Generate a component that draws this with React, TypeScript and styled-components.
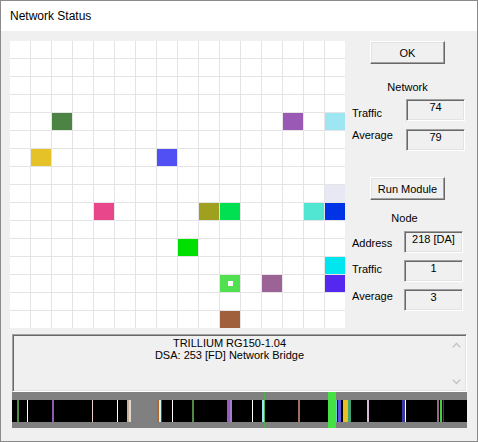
import React from 'react';
import styled, { createGlobalStyle } from 'styled-components';

const UI_FONT = `'Liberation Sans', Arial, sans-serif`;

type Mark = { row: number; col: number; color: string; dot?: boolean };

const NODES: Mark[] = [
  { row: 4, col: 2, color: '#4b8443' },
  { row: 4, col: 13, color: '#9b59b6' },
  { row: 4, col: 15, color: '#9ee6f2' },
  { row: 6, col: 1, color: '#e6c229' },
  { row: 6, col: 7, color: '#5050f5' },
  { row: 8, col: 15, color: '#e8e8f5' },
  { row: 9, col: 4, color: '#e8478c' },
  { row: 9, col: 9, color: '#a0a020' },
  { row: 9, col: 10, color: '#00e050' },
  { row: 9, col: 14, color: '#50e6d2' },
  { row: 9, col: 15, color: '#0033e6' },
  { row: 11, col: 8, color: '#00e000' },
  { row: 12, col: 15, color: '#00e6f0' },
  { row: 13, col: 10, color: '#50e050', dot: true },
  { row: 13, col: 12, color: '#9c6496' },
  { row: 13, col: 15, color: '#5528f0' },
  { row: 15, col: 10, color: '#a0603c' },
];

// activity strip: x in strip coords, width, colour, full = crosses the grey border
const TICKS: { x: number; w: number; c: string; full?: boolean }[] = [
  { x: 5, w: 2, c: '#4e8a42' },
  { x: 15, w: 1, c: '#ffffff' },
  { x: 40, w: 2, c: '#9058b0' },
  { x: 80, w: 1, c: '#f0d0d0' },
  { x: 105, w: 1, c: '#ffffff' },
  { x: 115, w: 2, c: '#c8b090' },
  { x: 117, w: 2, c: '#d8d8d8' },
  { x: 145, w: 2, c: '#b06a30' },
  { x: 147, w: 2, c: '#c8f4f4' },
  { x: 149, w: 1, c: '#3040d0' },
  { x: 160, w: 1, c: '#ffffff' },
  { x: 180, w: 2, c: '#4e8a42' },
  { x: 215, w: 3, c: '#9a5ab8' },
  { x: 218, w: 2, c: '#a080d0' },
  { x: 240, w: 1, c: '#ffffff' },
  { x: 250, w: 2, c: '#a0e4f0' },
  { x: 252, w: 1, c: '#50b050', full: true },
  { x: 286, w: 2, c: '#a07060' },
  { x: 316, w: 8, c: '#44e044', full: true },
  { x: 324, w: 1, c: '#60d8c8' },
  { x: 326, w: 3, c: '#6050e0' },
  { x: 331, w: 5, c: '#e8c020' },
  { x: 336, w: 3, c: '#40a070' },
  { x: 355, w: 2, c: '#d8b8d8' },
  { x: 390, w: 3, c: '#3838a8' },
  { x: 393, w: 1, c: '#ffffff' },
  { x: 425, w: 2, c: '#9c6488' },
  { x: 428, w: 2, c: '#40d040' },
  { x: 431, w: 1, c: '#2828f0' },
];

const GlobalStyle = createGlobalStyle`
  html, body {
    margin: 0;
    padding: 0;
    background: #f0f0f0;
  }
  * {
    box-sizing: border-box;
  }
`;

export default function App() {
  const cells = [];
  for (let row = 0; row < 16; row++) {
    for (let col = 0; col < 16; col++) {
      const mark = NODES.find((n) => n.row === row && n.col === col);
      cells.push(
        <Node key={`${row}-${col}`} $color={mark ? mark.color : '#ffffff'}>
          {mark && mark.dot && <Dot />}
        </Node>
      );
    }
  }

  return (
    <Window>
      <GlobalStyle />
      <TitleBar>Network Status</TitleBar>
      <Client>
        <TopRow>
          <NodeGrid>{cells}</NodeGrid>
          <Panel>
            <PushButton>OK</PushButton>
            <Heading $indent={25} $gap={17}>Network</Heading>
            <FieldRow $gap={5}>
              <FieldLabel $width={54} $drop={8}>Traffic</FieldLabel>
              <ValueBox>74</ValueBox>
            </FieldRow>
            <FieldRow $gap={8}>
              <FieldLabel $width={54} $drop={0}>Average</FieldLabel>
              <ValueBox>79</ValueBox>
            </FieldRow>
            <PushButton $gap={26}>Run Module</PushButton>
            <Heading $indent={22} $gap={12}>Node</Heading>
            <FieldRow $gap={6}>
              <FieldLabel $width={52} $drop={6}>Address</FieldLabel>
              <ValueBox>218 [DA]</ValueBox>
            </FieldRow>
            <FieldRow $gap={7}>
              <FieldLabel $width={52} $drop={3}>Traffic</FieldLabel>
              <ValueBox>1</ValueBox>
            </FieldRow>
            <FieldRow $gap={7}>
              <FieldLabel $width={52} $drop={1}>Average</FieldLabel>
              <ValueBox>3</ValueBox>
            </FieldRow>
          </Panel>
        </TopRow>

        <InfoBox>
          <InfoText>
            <div>TRILLIUM RG150-1.04</div>
            <div>DSA: 253 [FD] Network Bridge</div>
          </InfoText>
          <ScrollBar>
            <ScrollArrow>
              <svg width="9" height="6" viewBox="0 0 9 6">
                <path d="M0.8 5.2 L4.5 1.5 L8.2 5.2" fill="none" stroke="#c2c2c2" strokeWidth="1.3" />
              </svg>
            </ScrollArrow>
            <ScrollArrow>
              <svg width="9" height="6" viewBox="0 0 9 6">
                <path d="M0.8 0.8 L4.5 4.5 L8.2 0.8" fill="none" stroke="#c2c2c2" strokeWidth="1.3" />
              </svg>
            </ScrollArrow>
          </ScrollBar>
        </InfoBox>

        <Strip>
          <svg width="455" height="36" viewBox="0 0 455 36">
            <rect x="0" y="0" width="455" height="36" fill="#808080" />
            <rect x="0" y="8" width="119" height="22" fill="#000000" />
            <rect x="145" y="8" width="310" height="22" fill="#000000" />
            {TICKS.map((t, i) => (
              <rect
                key={i}
                x={t.x}
                y={t.full ? 0 : 8}
                width={t.w}
                height={t.full ? 36 : 22}
                fill={t.c}
              />
            ))}
          </svg>
        </Strip>
      </Client>
    </Window>
  );
}

const Window = styled.div`
  width: 478px;
  height: 442px;
  border: 1px solid #8a8a8a;
  background: #f0f0f0;
  font-family: ${UI_FONT};
  color: #000;
  overflow: hidden;
`;

const TitleBar = styled.div`
  height: 30px;
  line-height: 30px;
  padding-left: 9px;
  background: #ffffff;
  font-size: 12px;
`;

const Client = styled.div`
  display: flex;
  flex-direction: column;
  padding: 10px 0 0 9px;
`;

const TopRow = styled.div`
  display: flex;
  align-items: flex-start;
`;

const NodeGrid = styled.div`
  display: grid;
  grid-template-columns: repeat(16, 20px);
  grid-auto-rows: 17px;
  gap: 1px;
  width: 335px;
  background: #e4e4e4;
`;

const Node = styled.div<{ $color: string }>`
  background: ${(p) => p.$color};
  display: flex;
  align-items: center;
  justify-content: center;
`;

const Dot = styled.div`
  width: 5px;
  height: 5px;
  background: #ffffff;
`;

const Panel = styled.div`
  display: flex;
  flex-direction: column;
  align-items: flex-start;
  width: 131px;
  font-size: 11px;
  line-height: 13px;
`;

const PushButton = styled.button<{ $gap?: number }>`
  margin: ${(p) => p.$gap || 0}px 0 0 25px;
  width: 75px;
  height: 23px;
  padding: 0;
  font-family: ${UI_FONT};
  font-size: 11px;
  color: #000;
  background: #f0f0f0;
  border: 1px solid;
  border-color: #ffffff #696969 #696969 #ffffff;
  box-shadow: inset -1px -1px 0 #a0a0a0, inset 1px 1px 0 #e3e3e3;
`;

const Heading = styled.div<{ $indent: number; $gap: number }>`
  margin: ${(p) => p.$gap}px 0 0 ${(p) => p.$indent}px;
  width: 75px;
  text-align: center;
`;

const FieldRow = styled.div<{ $gap: number }>`
  display: flex;
  align-items: flex-start;
  margin: ${(p) => p.$gap}px 0 0 7px;
`;

const FieldLabel = styled.div<{ $width: number; $drop: number }>`
  width: ${(p) => p.$width}px;
  padding-top: ${(p) => p.$drop}px;
`;

const ValueBox = styled.div`
  width: 59px;
  height: 22px;
  padding-top: 1px;
  text-align: center;
  background: #f0f0f0;
  border: 1px solid;
  border-color: #a0a0a0 #ffffff #ffffff #a0a0a0;
  box-shadow: inset 1px 1px 0 #696969, inset -1px -1px 0 #e3e3e3;
`;

const InfoBox = styled.div`
  display: flex;
  margin: 6px 0 0 2px;
  width: 455px;
  height: 58px;
  background: #f0f0f0;
  border: 1px solid;
  border-color: #a0a0a0 #ffffff #ffffff #a0a0a0;
  box-shadow: inset 1px 1px 0 #696969, inset -1px -1px 0 #e3e3e3;
`;

const InfoText = styled.div`
  flex: 1;
  padding: 2px 2px 0 0;
  font-size: 11px;
  line-height: 12px;
  text-align: center;
`;

const ScrollBar = styled.div`
  display: flex;
  flex-direction: column;
  justify-content: space-between;
  width: 17px;
  margin: 1px 1px 1px 0;
`;

const ScrollArrow = styled.div`
  height: 17px;
  display: flex;
  align-items: center;
  justify-content: center;
`;

const Strip = styled.div`
  margin-left: 2px;
  width: 455px;
  height: 36px;
  svg {
    display: block;
  }
`;
